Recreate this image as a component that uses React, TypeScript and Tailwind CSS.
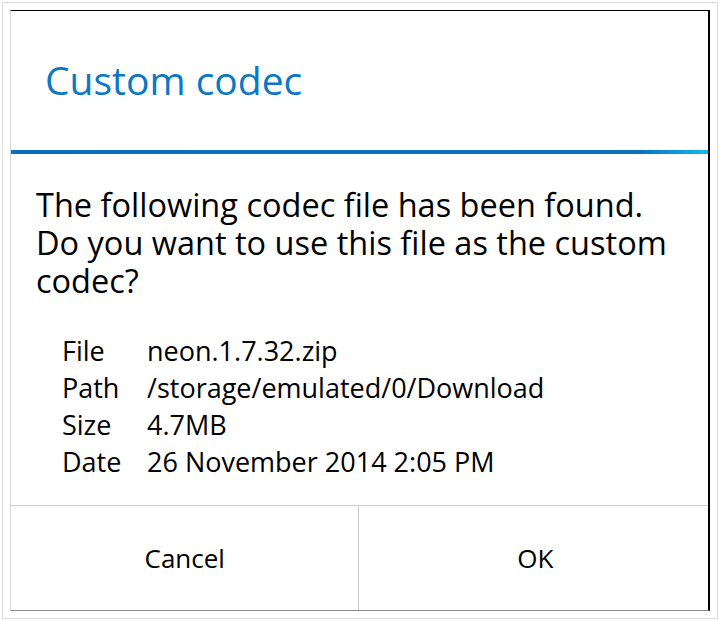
import React from 'react';

const font = { fontFamily: '"Open Sans", "Noto Sans", sans-serif' };

const details = [
  ['File', 'neon.1.7.32.zip'],
  ['Path', '/storage/emulated/0/Download'],
  ['Size', '4.7MB'],
  ['Date', '26 November 2014 2:05 PM'],
];

export default function App() {
  return (
    <div className="h-[621px] w-[720px] bg-white p-[2px]" style={font}>
      <div className="h-full border border-[#dcdcdc] p-[7px]">
        <div className="flex h-[601px] w-[700px] flex-col border-t border-l border-b border-r-2 border-t-black border-r-black border-l-[#d6d6d6] border-b-[#8a8a8a] bg-white">
          {/* title */}
          <div className="flex h-[139px] items-center pl-[34px] pb-[2px]">
            <h1 className="text-[39px] leading-none text-[#0b78c6]">Custom codec</h1>
          </div>
          <div className="h-[4px] bg-gradient-to-r from-[#0a6fbe] via-[#0a72c2] via-90% to-[#19b7f0]" />

          {/* message */}
          <div className="px-[25px] pt-[32px] text-[32.5px] leading-[38px] text-black">
            The following codec file has been found.
            <br />
            Do you want to use this file as the custom
            <br />
            codec?
          </div>

          {/* details */}
          <div className="flex flex-col pl-[51px] pt-[32px] text-[27px] leading-[37px] text-black">
            {details.map(([k, v]) => (
              <div key={k} className="flex">
                <span className="w-[85px]">{k}</span>
                <span>{v}</span>
              </div>
            ))}
          </div>

          {/* buttons */}
          <div className="mt-auto flex h-[105px] border-t border-[#cfcfcf] text-[26px] text-black">
            <div className="flex flex-1 items-center justify-center border-r border-[#cfcfcf] pl-[1px]">Cancel</div>
            <div className="flex flex-1 items-center justify-center pl-[4px]">OK</div>
          </div>
        </div>
      </div>
    </div>
  );
}
